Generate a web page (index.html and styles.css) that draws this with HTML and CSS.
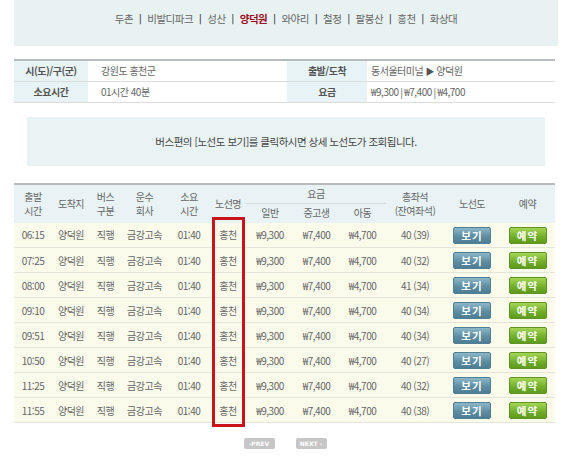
FILE: index.html
```html
<!DOCTYPE html>
<html lang="ko">
<head>
<meta charset="utf-8">
<title>양덕원 노선</title>
<link rel="stylesheet" href="styles.css">
</head>
<body>
<div class="page">
  <nav class="stops">
    <span class="stop">두촌</span><span class="sep">|</span><span class="stop">비발디파크</span><span class="sep">|</span><span class="stop">성산</span><span class="sep">|</span><span class="stop active">양덕원</span><span class="sep">|</span><span class="stop">와야리</span><span class="sep">|</span><span class="stop">철정</span><span class="sep">|</span><span class="stop">팔봉산</span><span class="sep">|</span><span class="stop">홍천</span><span class="sep">|</span><span class="stop">화상대</span>
  </nav>

  <table class="info">
    <colgroup><col class="c-l1"><col class="c-v1"><col class="c-l2"><col class="c-v2"></colgroup>
    <tr>
      <th>시(도)/구(군)</th><td class="v1">강원도 홍천군</td>
      <th>출발/도착</th><td class="v2">동서울터미널 <span class="tri">▶</span> 양덕원</td>
    </tr>
    <tr>
      <th>소요시간</th><td class="v1">01시간 40분</td>
      <th>요금</th><td class="v2">₩9,300 | ₩7,400 | ₩4,700</td>
    </tr>
  </table>

  <div class="notice">버스편의 [노선도 보기]를 클릭하시면 상세 노선도가 조회됩니다.</div>

  <div class="sched-wrap">
    <table class="sched">
      <colgroup>
        <col style="width:38px"><col style="width:38px"><col style="width:31px"><col style="width:47px">
        <col style="width:42px"><col style="width:36px"><col style="width:48px"><col style="width:45px">
        <col style="width:47px"><col style="width:58px"><col style="width:56px"><col style="width:55px">
      </colgroup>
      <thead>
        <tr class="h1">
          <th rowspan="2">출발<br>시간</th>
          <th rowspan="2">도착지</th>
          <th rowspan="2">버스<br>구분</th>
          <th rowspan="2">운수<br>회사</th>
          <th rowspan="2">소요<br>시간</th>
          <th rowspan="2">노선명</th>
          <th colspan="3" class="fare">요금</th>
          <th rowspan="2">총좌석<br>(잔여좌석)</th>
          <th rowspan="2">노선도</th>
          <th rowspan="2">예약</th>
        </tr>
        <tr class="h2">
          <th>일반</th><th>중고생</th><th>아동</th>
        </tr>
      </thead>
      <tbody>
        <tr><td>06:15</td><td>양덕원</td><td>직행</td><td>금강고속</td><td>01:40</td><td>홍천</td><td>₩9,300</td><td>₩7,400</td><td>₩4,700</td><td>40 (39)</td><td><span class="btn view">보기</span></td><td><span class="btn book">예약</span></td></tr>
        <tr><td>07:25</td><td>양덕원</td><td>직행</td><td>금강고속</td><td>01:40</td><td>홍천</td><td>₩9,300</td><td>₩7,400</td><td>₩4,700</td><td>40 (32)</td><td><span class="btn view">보기</span></td><td><span class="btn book">예약</span></td></tr>
        <tr><td>08:00</td><td>양덕원</td><td>직행</td><td>금강고속</td><td>01:40</td><td>홍천</td><td>₩9,300</td><td>₩7,400</td><td>₩4,700</td><td>41 (34)</td><td><span class="btn view">보기</span></td><td><span class="btn book">예약</span></td></tr>
        <tr><td>09:10</td><td>양덕원</td><td>직행</td><td>금강고속</td><td>01:40</td><td>홍천</td><td>₩9,300</td><td>₩7,400</td><td>₩4,700</td><td>40 (34)</td><td><span class="btn view">보기</span></td><td><span class="btn book">예약</span></td></tr>
        <tr><td>09:51</td><td>양덕원</td><td>직행</td><td>금강고속</td><td>01:40</td><td>홍천</td><td>₩9,300</td><td>₩7,400</td><td>₩4,700</td><td>40 (34)</td><td><span class="btn view">보기</span></td><td><span class="btn book">예약</span></td></tr>
        <tr><td>10:50</td><td>양덕원</td><td>직행</td><td>금강고속</td><td>01:40</td><td>홍천</td><td>₩9,300</td><td>₩7,400</td><td>₩4,700</td><td>40 (27)</td><td><span class="btn view">보기</span></td><td><span class="btn book">예약</span></td></tr>
        <tr><td>11:25</td><td>양덕원</td><td>직행</td><td>금강고속</td><td>01:40</td><td>홍천</td><td>₩9,300</td><td>₩7,400</td><td>₩4,700</td><td>40 (32)</td><td><span class="btn view">보기</span></td><td><span class="btn book">예약</span></td></tr>
        <tr><td>11:55</td><td>양덕원</td><td>직행</td><td>금강고속</td><td>01:40</td><td>홍천</td><td>₩9,300</td><td>₩7,400</td><td>₩4,700</td><td>40 (38)</td><td><span class="btn view">보기</span></td><td><span class="btn book">예약</span></td></tr>
      </tbody>
    </table>
    <div class="highlight"></div>
  </div>

  <div class="pager">
    <span class="pbtn">‹PREV</span>
    <span class="pbtn">NEXT ›</span>
  </div>
</div>
</body>
</html>
```

FILE: styles.css
```css
* { box-sizing: border-box; }
html, body { margin: 0; padding: 0; background: #fff; }
body {
  font-family: "Noto Sans CJK KR", "Noto Sans", sans-serif;
  font-size: 10px;
  color: #666;
  letter-spacing: -0.5px;
}
.page { width: 544px; margin-left: 14px; }

/* stop navigation */
.stops {
  height: 46px;
  background: #e8f2f3;
  padding-top: 12px;
  text-align: center;
  font-size: 10.5px;
  line-height: 14px;
  color: #666;
}
.stops .sep { color: #444; font-weight: bold; margin: 0 6px; font-size: 9px; position: relative; top: -1px; }
.stops .active { color: #9b0d1e; font-weight: bold; }

/* info table */
.info {
  width: 541px;
  margin-top: 13px;
  border-collapse: collapse;
  border-top: 2px solid #b7bbbd;
}
.c-l1 { width: 74px; }
.c-v1 { width: 199px; }
.c-l2 { width: 80px; }
.c-v2 { width: 188px; }
.info th, .info td {
  height: 21px;
  padding: 0;
  border-bottom: 1px solid #dcdcdc;
  font-size: 10px;
}
.info th {
  background: #e8f3f5;
  color: #555;
  font-weight: bold;
  text-align: center;
}
.info td { color: #666; }
.info td.v1 { padding-left: 13px; }
.info td.v2 { padding-left: 4px; }
.info .tri { font-size: 9px; color: #555; }

/* notice */
.notice {
  width: 518px;
  margin: 14px 0 0 13px;
  height: 49px;
  background: #e9f3f4;
  display: flex;
  align-items: center;
  justify-content: center;
  font-size: 10.5px;
  color: #444;
}

/* schedule table */
.sched-wrap { position: relative; margin-top: 17px; width: 541px; }
.sched {
  width: 541px;
  table-layout: fixed;
  border-collapse: collapse;
  border-top: 2px solid #b7bbbd;
}
.sched thead th {
  background: #e9f3f6;
  font-weight: normal;
  color: #666;
  padding: 0;
  text-align: center;
  line-height: 14px;
}
.sched .h1 th { height: 20px; }
.sched .h2 th { height: 19px; }
.sched th.fare { border-bottom: 1px solid #cfd8dc; }
.sched tbody td {
  background: #fbfbec;
  height: 25px;
  padding: 0;
  text-align: center;
  border-bottom: 1px solid #e4e4da;
  color: #666;
  white-space: nowrap;
}
.btn {
  display: inline-block;
  width: 38px;
  height: 17px;
  line-height: 15px;
  border-radius: 2px;
  color: #fff;
  font-weight: bold;
  font-size: 10.5px;
  letter-spacing: 1px;
  vertical-align: middle;
}
.btn.view {
  background: linear-gradient(#8db7c9, #5f8ea3 55%, #4d7d92);
  border: 1px solid #507f93;
}
.btn.book {
  background: linear-gradient(#a4d555, #74b02c 55%, #5e9a1c);
  border: 1px solid #5f9422;
}
.highlight {
  position: absolute;
  left: 198px;
  top: 34px;
  width: 33px;
  height: 210px;
  border: 3px solid #c8141b;
}

/* pager */
.pager {
  display: flex;
  justify-content: center;
  gap: 21px;
  margin-top: 15px;
  width: 544px;
  padding-right: 2px;
}
.pbtn {
  width: 31px;
  height: 11px;
  line-height: 11px;
  border-radius: 2px;
  background: #c6c6c6;
  color: #fff;
  font-family: "DejaVu Sans", sans-serif;
  font-size: 6px;
  font-weight: bold;
  text-align: center;
  letter-spacing: 0;
}
```
